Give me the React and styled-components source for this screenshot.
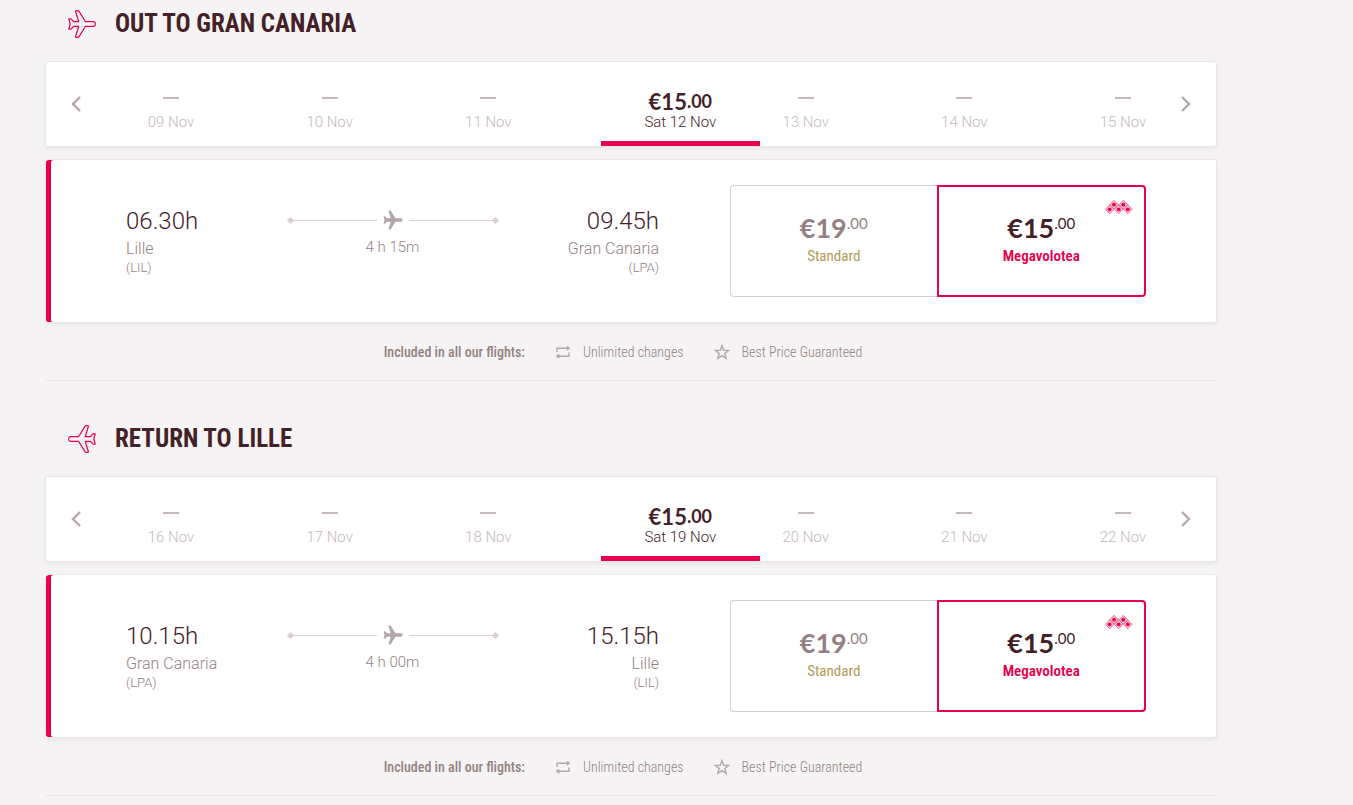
import React from "react";
import styled, { createGlobalStyle } from "styled-components";

const color = {
  page: "#f5f3f4",
  line: "#e9e6e7",
  ink: "#442127",
  muted: "#94817f",
  pale: "#c6b9bb",
  icon: "#b5a6a9",
  red: "#e8004c",
  gold: "#b09a55",
};
const body = `Roboto, "Liberation Sans", sans-serif`;
const figures = `Lato, "Liberation Sans", sans-serif`;
const narrow = `"Roboto Condensed", "Open Sans Condensed", "Noto Sans Condensed", Roboto, sans-serif`;

const GlobalStyle = createGlobalStyle`
  *, *::before, *::after { box-sizing: border-box; }
  body { margin: 0; background: ${color.page}; color: ${color.ink}; font-family: ${body}; }
  button { font: inherit; color: inherit; background: none; border: 0; padding: 0; cursor: pointer; }
`;

const Page = styled.main`
  padding: 0 136px 9px 45px;
`;

const Leg = styled.section`
  border-bottom: 1px solid ${color.line};
  & + & { margin-top: 34px; }
`;

const LegHeader = styled.header`
  display: flex;
  align-items: center;
  gap: 19px;
  height: 47px;
  padding-left: 23px;
  margin-bottom: 14px;
`;

const LegTitle = styled.h2`
  margin: 0;
  font: 700 25px/30px ${narrow};
  text-transform: uppercase;
`;

const OutlinePlane = styled.svg`
  width: 28px;
  height: 28px;
  fill: none;
  stroke: ${color.red};
  stroke-width: 1.2;
  stroke-linejoin: round;
`;

const Card = styled.div`
  background: #fff;
  border: 1px solid ${color.line};
  border-radius: 3px;
  box-shadow: 0 2px 4px rgba(68, 33, 39, 0.06);
`;

const DateBar = styled(Card)`
  display: flex;
  height: 86px;
  margin-bottom: 12px;
`;

const Arrow = styled.button`
  display: flex;
  align-items: center;
  justify-content: center;
  width: ${(p) => (p.$next ? "34px" : "60px")};
  margin-right: ${(p) => (p.$next ? "13px" : "19px")};
  svg { width: 12px; height: 16px; fill: none; stroke: ${color.icon}; stroke-width: 2.4; }
`;

const Days = styled.div`
  flex: 1;
  display: grid;
  grid-template-columns: repeat(6, 1fr) 92px;
`;

const Day = styled.button`
  display: flex;
  flex-direction: column;
  align-items: center;
  width: ${(p) => (p.$selected ? "100%" : "92px")};
  padding-top: 29px;
  color: ${(p) => (p.$selected ? color.ink : color.pale)};
  border-bottom: 5px solid ${(p) => (p.$selected ? color.red : "transparent")};
`;

const DayDate = styled.span`
  font-size: 15px;
  font-weight: 300;
  line-height: 18px;
`;

const NoFare = styled.span`
  width: 16px;
  height: 2px;
  margin: 6px 0 14px;
  background: currentColor;
`;

const DayPrice = styled.span`
  display: flex;
  align-items: flex-start;
  font-family: ${figures};
  font-size: 22px;
  font-weight: 700;
  line-height: 22px;
`;

const DayCents = styled.span`
  font-size: 18px;
  line-height: 20px;
`;

const FlightCard = styled(Card)`
  display: grid;
  grid-template-columns: 1fr 416px;
  gap: 71px;
  margin-left: 1px;
  padding: 25px 70px 25px 80px;
  border-left: 0;
  box-shadow: inset 5px 0 ${color.red}, 0 2px 4px rgba(68, 33, 39, 0.06);
`;

const Journey = styled.div`
  display: grid;
  grid-template-columns: 1fr 212px 1fr;
  padding-top: 20px;
`;

const Stop = styled.div`
  text-align: ${(p) => (p.$end ? "right" : "left")};
`;

const Time = styled.div`
  font-size: 24px;
  font-weight: 300;
  line-height: 32px;
  margin-bottom: 2px;
`;

const City = styled.div`
  font-size: 16px;
  line-height: 20px;
  font-weight: 300;
  color: ${color.muted};
`;

const Code = styled.div`
  font-size: 13px;
  font-weight: 300;
  line-height: 18px;
  color: ${color.muted};
`;

const Path = styled.div`
  text-align: center;
`;

const Track = styled.div`
  display: flex;
  align-items: center;
  height: 30px;
  margin-bottom: 3px;
`;

const Rail = styled.span`
  flex: 1;
  height: 1px;
  background: #d8ced0;
`;

const Knot = styled.span`
  width: 5px;
  height: 5px;
  margin: 0 1px;
  background: #d8ced0;
  transform: rotate(45deg);
`;

const SolidPlane = styled.svg`
  width: 22px;
  height: 20px;
  margin: 0 5px;
  fill: ${color.icon};
`;

const Duration = styled.div`
  font-size: 15px;
  font-weight: 300;
  line-height: 18px;
  color: ${color.muted};
`;

const Fares = styled.div`
  display: flex;
  height: 112px;
`;

const Fare = styled.button`
  flex: 1;
  position: relative;
  display: flex;
  flex-direction: column;
  align-items: center;
  padding-top: ${(p) => (p.$selected ? "27px" : "28px")};
  color: ${(p) => (p.$selected ? color.ink : "#947f82")};
  border: ${(p) => (p.$selected ? `2px solid ${color.red}` : "1px solid #d8ced0")};
  border-radius: ${(p) => (p.$selected ? "0 4px 4px 0" : "4px 0 0 4px")};
  border-right-width: ${(p) => (p.$selected ? "2px" : "0")};
`;

const FarePrice = styled.span`
  display: flex;
  align-items: flex-start;
  font-family: ${figures};
  font-size: 27px;
  font-weight: 700;
  line-height: 27px;
`;

const FareCents = styled.span`
  font-size: 15px;
  font-weight: 400;
  line-height: 18px;
`;

const FareName = styled.span`
  margin-top: 4px;
  font: ${(p) => (p.$selected ? 600 : 400)} 15px/22px ${narrow};
  color: ${(p) => (p.$selected ? color.red : color.gold)};
`;

const ClubMark = styled.svg`
  position: absolute;
  top: 13px;
  right: 11px;
  width: 28px;
  height: 14px;
`;

const Perks = styled.div`
  display: flex;
  align-items: center;
  justify-content: center;
  gap: 30px;
  height: 57px;
  padding-right: 16px;
  font-family: ${narrow};
  font-size: 14px;
  font-weight: 300;
  line-height: 18px;
  color: ${color.muted};
  strong { font-weight: 500; }
`;

const Perk = styled.span`
  display: flex;
  align-items: center;
  gap: 12px;
  svg { width: 16px; height: 16px; fill: none; stroke: ${color.icon}; stroke-width: 1.4; }
`;

const planePath =
  "M25.5 11.7H17.5L11.2 1.6Q10.5.6 9.5.6H8.4Q7.4.6 7.7 1.8L10.8 11.7H5.5L3.6 9.4Q3.2 8.9 2.5 8.9H.8L2.2 14 .8 19.1H2.5Q3.2 19.1 3.6 18.6L5.5 16.3H10.8L7.7 26.2Q7.4 27.4 8.4 27.4H9.5Q10.5 27.4 11.2 26.4L17.5 16.3H25.5Q27.4 15.9 27.4 14Q27.4 12.1 25.5 11.7Z";

const diamonds = [[9, 4.7], [18.3, 4.7], [4.6, 9.3], [13.7, 9.3], [22.8, 9.3]];

function Club() {
  return (
    <ClubMark viewBox="0 0 28 14" aria-hidden="true">
      {diamonds.map(([x, y]) => (
        <g key={`${x}`}>
          <path d={`M${x} ${y - 4.4}l4.4 4.4-4.4 4.4-4.4-4.4z`} fill="#fbc0d2" stroke="#f0557f" strokeWidth=".8" />
          <circle cx={x} cy={y} r="1.9" fill={color.red} />
        </g>
      ))}
    </ClubMark>
  );
}

const legs = [
  {
    title: "Out to Gran Canaria",
    days: ["09 Nov", "10 Nov", "11 Nov", "Sat 12 Nov", "13 Nov", "14 Nov", "15 Nov"],
    from: ["06.30h", "Lille", "(LIL)"],
    to: ["09.45h", "Gran Canaria", "(LPA)"],
    duration: "4 h 15m",
  },
  {
    title: "Return to Lille",
    back: true,
    days: ["16 Nov", "17 Nov", "18 Nov", "Sat 19 Nov", "20 Nov", "21 Nov", "22 Nov"],
    from: ["10.15h", "Gran Canaria", "(LPA)"],
    to: ["15.15h", "Lille", "(LIL)"],
    duration: "4 h 00m",
  },
];

function StopInfo({ stop, end }) {
  return (
    <Stop $end={end}>
      <Time>{stop[0]}</Time>
      <City>{stop[1]}</City>
      <Code>{stop[2]}</Code>
    </Stop>
  );
}

function FareOption({ whole, name, selected }) {
  return (
    <Fare type="button" $selected={selected} aria-pressed={!!selected}>
      <FarePrice>{whole}<FareCents>.00</FareCents></FarePrice>
      <FareName $selected={selected}>{name}</FareName>
      {selected && <Club />}
    </Fare>
  );
}

function FlightLeg({ leg }) {
  return (
    <Leg>
      <LegHeader>
        <OutlinePlane viewBox="0 0 28 28" aria-hidden="true">
          <path d={planePath} transform={leg.back ? "matrix(-1 0 0 1 28 0)" : undefined} />
        </OutlinePlane>
        <LegTitle>{leg.title}</LegTitle>
      </LegHeader>
      <DateBar>
        <Arrow type="button" aria-label="Previous days">
          <svg viewBox="0 0 12 16"><path d="M10 1 3 8l7 7" /></svg>
        </Arrow>
        <Days>
          {leg.days.map((day, i) => (
            <Day key={day} type="button" $selected={i === 3}>
              {i === 3 ? <DayPrice>€15<DayCents>.00</DayCents></DayPrice> : <NoFare />}
              <DayDate>{day}</DayDate>
            </Day>
          ))}
        </Days>
        <Arrow type="button" $next aria-label="Next days">
          <svg viewBox="0 0 12 16"><path d="m2 1 7 7-7 7" /></svg>
        </Arrow>
      </DateBar>
      <FlightCard>
        <Journey>
          <StopInfo stop={leg.from} />
          <Path>
            <Track>
              <Knot /><Rail />
              <SolidPlane viewBox="0 0 28 28" aria-hidden="true"><path d={planePath} /></SolidPlane>
              <Rail /><Knot />
            </Track>
            <Duration>{leg.duration}</Duration>
          </Path>
          <StopInfo stop={leg.to} end />
        </Journey>
        <Fares>
          <FareOption whole="€19" name="Standard" />
          <FareOption whole="€15" name="Megavolotea" selected />
        </Fares>
      </FlightCard>
      <Perks>
        <strong>Included in all our flights:</strong>
        <Perk>
          <svg viewBox="0 0 16 16" aria-hidden="true">
            <path d="M2 8V4.2h11M14 8.5v3.7H3" />
            <path d="m12 2 3 2.2-3 2.2zM4 10l-3 2.2 3 2.2z" fill={color.icon} strokeWidth=".5" />
          </svg>
          Unlimited changes
        </Perk>
        <Perk>
          <svg viewBox="0 0 16 16" aria-hidden="true">
            <path d="m8 1.6 1.7 4.6 5 .2-3.9 3.1 1.4 4.9L8 11.6l-4.2 2.8 1.4-4.9-3.9-3.1 5-.2z" />
          </svg>
          Best Price Guaranteed
        </Perk>
      </Perks>
    </Leg>
  );
}

export default function App() {
  return (
    <>
      <GlobalStyle />
      <Page>
        {legs.map((leg) => <FlightLeg key={leg.title} leg={leg} />)}
      </Page>
    </>
  );
}
